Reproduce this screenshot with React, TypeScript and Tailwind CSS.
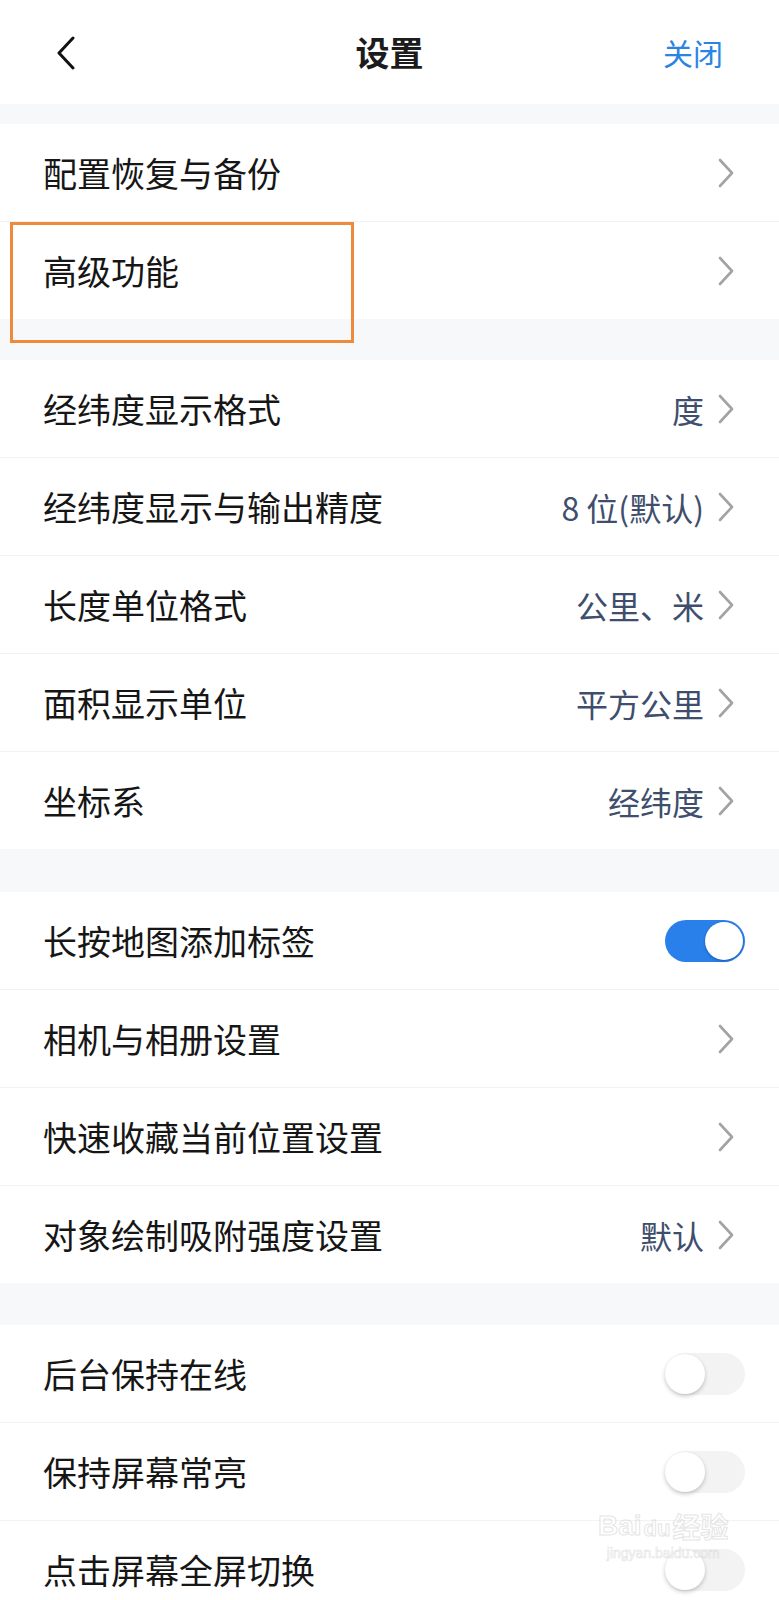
import React from "react";

const FONT = { fontFamily: '"Noto Sans CJK SC", "Noto Sans", sans-serif' };

function Chevron() {
  return (
    <svg width="18" height="30" viewBox="0 0 18 30" className="shrink-0 mr-[10px]">
      <path d="M3 2 L15 15 L3 28" fill="none" stroke="#a3a3a3" strokeWidth="2.6" strokeLinecap="round" strokeLinejoin="round" />
    </svg>
  );
}

function Toggle({ on }: { on: boolean }) {
  if (on) {
    return (
      <div className="relative w-[80px] h-[42px] rounded-full bg-[#2a80ea] shrink-0">
        <div className="absolute right-[2px] top-[2px] w-[38px] h-[38px] rounded-full bg-white shadow-[0_1px_3px_rgba(0,40,120,0.45)]" />
      </div>
    );
  }
  return (
    <div className="relative w-[80px] h-[42px] rounded-full bg-[#f3f3f3] shrink-0">
      <div className="absolute left-0 top-[1px] w-[40px] h-[40px] rounded-full bg-white shadow-[0_2px_4px_rgba(0,0,0,0.22)]" />
    </div>
  );
}

type Row = { label: string; value?: string; toggle?: boolean; on?: boolean };

function SettingRow({ row, last }: { row: Row; last: boolean }) {
  return (
    <div className={"flex items-center bg-white pl-[43px] pr-[34px] " + (last ? "h-[97px]" : "h-[98px] border-b border-[#f1f2f4]")}>
      <span className="flex-1 text-[34px] leading-none text-[#161616]">{row.label}</span>
      {row.toggle ? (
        <Toggle on={!!row.on} />
      ) : (
        <div className="flex items-center gap-[13px]">
          {row.value && <span className="text-[32px] leading-none text-[#3e4e6c]">{row.value}</span>}
          <Chevron />
        </div>
      )}
    </div>
  );
}

function Group({ rows }: { rows: Row[] }) {
  return (
    <div className="bg-white">
      {rows.map((r, i) => (
        <SettingRow key={r.label} row={r} last={i === rows.length - 1} />
      ))}
    </div>
  );
}

export default function App() {
  const g1: Row[] = [{ label: "配置恢复与备份" }, { label: "高级功能" }];
  const g2: Row[] = [
    { label: "经纬度显示格式", value: "度" },
    { label: "经纬度显示与输出精度", value: "8 位(默认)" },
    { label: "长度单位格式", value: "公里、米" },
    { label: "面积显示单位", value: "平方公里" },
    { label: "坐标系", value: "经纬度" },
  ];
  const g3: Row[] = [
    { label: "长按地图添加标签", toggle: true, on: true },
    { label: "相机与相册设置" },
    { label: "快速收藏当前位置设置" },
    { label: "对象绘制吸附强度设置", value: "默认" },
  ];
  const g4: Row[] = [
    { label: "后台保持在线", toggle: true, on: false },
    { label: "保持屏幕常亮", toggle: true, on: false },
    { label: "点击屏幕全屏切换", toggle: true, on: false },
  ];

  return (
    <div className="relative w-[779px] h-[1600px] overflow-hidden bg-[#f7f8fa]" style={FONT}>
      {/* Header */}
      <div className="relative flex items-center justify-between h-[104px] bg-white pl-[56px] pr-[56px]">
        <svg width="20" height="34" viewBox="0 0 20 34" className="mt-[2px]">
          <path d="M17 2 L3 17 L17 32" fill="none" stroke="#111" strokeWidth="3" strokeLinecap="round" strokeLinejoin="round" />
        </svg>
        <span className="absolute left-1/2 -translate-x-1/2 text-[34px] font-bold leading-none text-[#1c1c1c]">设置</span>
        <span className="text-[30px] leading-none text-[#2a84e2]">关闭</span>
      </div>

      <div className="h-[20px]" />
      <Group rows={g1} />
      <div className="h-[41px]" />
      <Group rows={g2} />
      <div className="h-[43px]" />
      <Group rows={g3} />
      <div className="h-[42px]" />
      <Group rows={g4} />

      {/* Highlight box */}
      <div className="absolute left-[10px] top-[222px] w-[344px] h-[121px] border-[3px] border-[#ee8a3c] pointer-events-none" />

      {/* Watermark */}
      <div className="absolute left-[598px] top-[1512px] flex flex-col items-center pointer-events-none opacity-60">
        <div className="flex items-end text-[28px] leading-none font-bold text-white" style={{ WebkitTextStroke: "1px #d4d4d4", fontFamily: '"Liberation Sans", sans-serif' }}>
          <span>Bai</span>
          <span className="mx-[2px] text-[22px]">du</span>
          <span style={{ fontFamily: '"Noto Sans CJK SC", sans-serif' }}>经验</span>
        </div>
        <span className="text-[14px] leading-none mt-[6px] text-white" style={{ WebkitTextStroke: "0.6px #d0d0d0", fontFamily: '"Liberation Sans", sans-serif' }}>jingyan.baidu.com</span>
      </div>
    </div>
  );
}
